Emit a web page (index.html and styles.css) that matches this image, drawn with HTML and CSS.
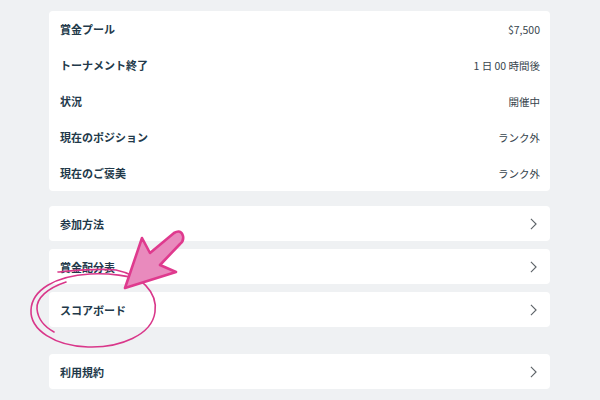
FILE: index.html
```html
<!DOCTYPE html>
<html lang="ja">
<head>
<meta charset="utf-8">
<link rel="stylesheet" href="styles.css">
</head>
<body>
<div class="page">
  <div class="card info">
    <div class="row"><span class="label">賞金プール</span><span class="value">$7,500</span></div>
    <div class="row"><span class="label">トーナメント終了</span><span class="value">1 日 00 時間後</span></div>
    <div class="row"><span class="label">状況</span><span class="value">開催中</span></div>
    <div class="row"><span class="label">現在のポジション</span><span class="value">ランク外</span></div>
    <div class="row"><span class="label">現在のご褒美</span><span class="value">ランク外</span></div>
  </div>
  <div class="links">
    <div class="card link"><span class="label">参加方法</span><svg class="chev" viewBox="0 0 8 14"><path d="M1 1 L7 7 L1 13"/></svg></div>
    <div class="card link"><span class="label">賞金配分表</span><svg class="chev" viewBox="0 0 8 14"><path d="M1 1 L7 7 L1 13"/></svg></div>
    <div class="card link"><span class="label">スコアボード</span><svg class="chev" viewBox="0 0 8 14"><path d="M1 1 L7 7 L1 13"/></svg></div>
  </div>
  <div class="card link terms"><span class="label">利用規約</span><svg class="chev" viewBox="0 0 8 14"><path d="M1 1 L7 7 L1 13"/></svg></div>
</div>
<svg class="annot" viewBox="0 0 600 400" width="600" height="400">
  <path class="pen" d="M58 272 C80 270 100 268 116 270 C140 275 158 292 155 312 C152 335 120 348 88 347 C55 346 30 330 31 310 C32 290 55 276 90 274 C110 273 130 276 140 280"/>
  <path class="pen" d="M66 282 C48 288 36 298 37 309 C38 320 45 327 54 332"/>
  <path class="arrow" d="M125 288 L142 238 L150 253 L174 233 Q181 229 183 236 Q184 241 180 244 L160 265 L176 272 Z"/>
</svg>
</body>
</html>
```

FILE: styles.css
```css
html, body {
  margin: 0;
  padding: 0;
  background: #eff1f3;
}
body {
  width: 600px;
  height: 400px;
  overflow: hidden;
  position: relative;
  font-family: "Noto Sans CJK JP", "Noto Sans", sans-serif;
  font-size: 11px;
}
.page {
  padding: 11px 50px 0 49px;
  display: flex;
  flex-direction: column;
}
.card {
  background: #ffffff;
  border-radius: 4px;
}
.info {
  display: flex;
  flex-direction: column;
}
.row {
  height: 36px;
  display: flex;
  align-items: center;
  justify-content: space-between;
  padding: 0 10px 0 11px;
}
.label {
  font-weight: 700;
  color: #22394a;
}
.value {
  color: #37444d;
  font-size: 10.5px;
}
.links {
  margin-top: 15px;
  display: flex;
  flex-direction: column;
  gap: 8px;
}
.link {
  height: 35px;
  display: flex;
  align-items: center;
  justify-content: space-between;
  padding: 0 13px 0 11px;
}
.terms {
  margin-top: 27px;
}
.chev {
  width: 7px;
  height: 12px;
  fill: none;
  stroke: #5d6368;
  stroke-width: 1.3;
}
.annot {
  position: absolute;
  left: 0;
  top: 0;
  pointer-events: none;
}
.pen {
  fill: none;
  stroke: #d9378a;
  stroke-width: 1.6;
  stroke-linecap: round;
}
.arrow {
  fill: #e98abd;
  stroke: #df3a8e;
  stroke-width: 2.6;
  stroke-linejoin: round;
}
```
